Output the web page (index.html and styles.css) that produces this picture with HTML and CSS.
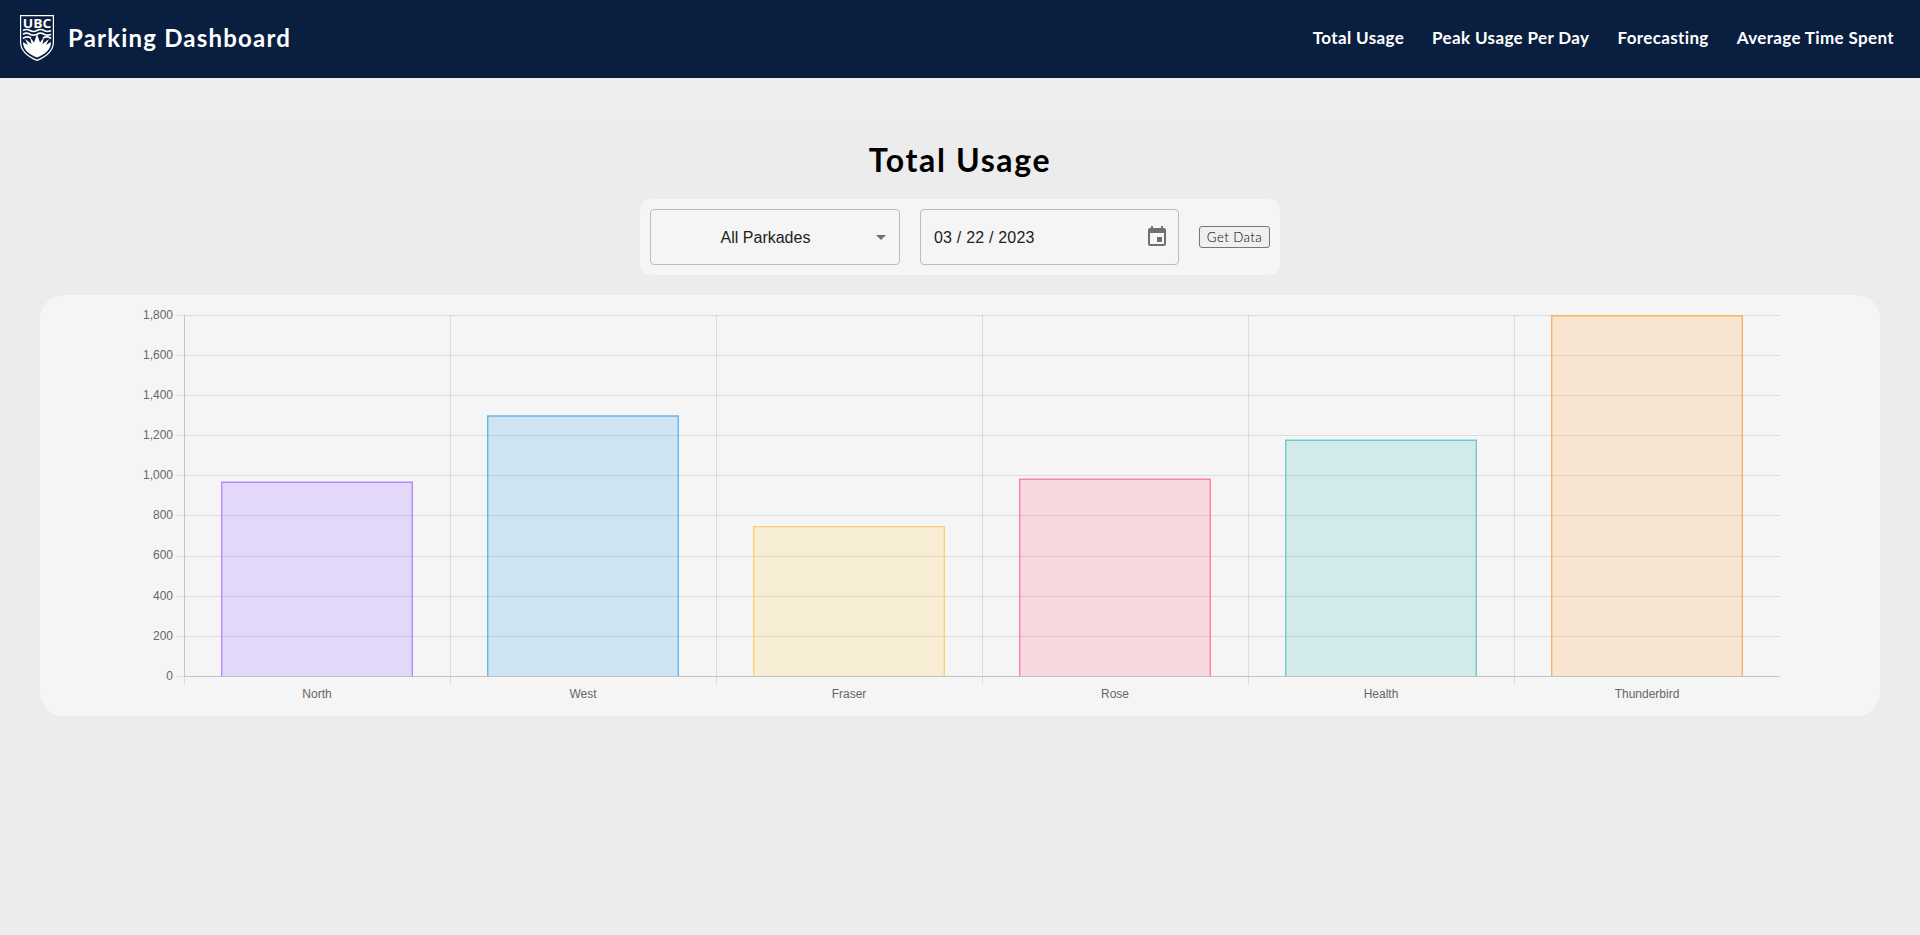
FILE: index.html
```html
<!DOCTYPE html>
<html lang="en">
<head>
<meta charset="utf-8">
<title>Parking Dashboard</title>
<link rel="stylesheet" href="styles.css">
</head>
<body>
<header class="navbar">
  <div class="brand">
    <svg class="crest" width="34" height="46" viewBox="0 0 34 46">
      <path d="M.6.6h32.8V27c0 9-7 14.500-16.400 18.400C7.600 41.500.6 36 .6 27z" fill="#0a1f40" stroke="#fff" stroke-width="1.200"/>
      <text x="17" y="12.600" class="crest-text" textLength="28.500" lengthAdjust="spacingAndGlyphs">UBC</text>
      <g fill="none" stroke="#fff" stroke-width="1.700">
        <path d="M3 15.500q3.500-2 7 0t7 0 7 0 7 0"/>
        <path d="M3 19.200q3.500-2 7 0t7 0 7 0 7 0"/>
        <path d="M3 23.500q3.500-3 8-.5M31 23.500q-3.500-3-8-.5"/>
      </g>
      <path d="M3 27l5 3-3-6 6.500 5-1.500-7 4 5.500L17 19l3 8.500 4-5.500-1.500 7 6.500-5-3 6 5-3c0 8-6 12-14 15.500C9 39 3 35 3 27z" fill="#fff"/>
    </svg>
    <span class="brand-name">Parking Dashboard</span>
  </div>
  <nav class="links">
    <a class="link">Total Usage</a>
    <a class="link">Peak Usage Per Day</a>
    <a class="link">Forecasting</a>
    <a class="link">Average Time Spent</a>
  </nav>
</header>
<main class="page">
  <h1 class="title">Total Usage</h1>
  <section class="filters">
    <div class="select"><span class="select-value">All Parkades</span>
      <svg class="arrow" width="24" height="24" viewBox="0 0 24 24"><path d="M7 10l5 5 5-5z" fill="#707070"/></svg>
    </div>
    <div class="date"><span class="date-value">03 / 22 / 2023</span>
      <svg width="24" height="24" viewBox="0 0 24 24"><path d="M17 12h-5v5h5v-5zM16 1v2H8V1H6v2H5c-1.110 0-1.990.9-1.990 2L3 19c0 1.100.89 2 2 2h14c1.100 0 2-.9 2-2V5c0-1.100-.9-2-2-2h-1V1h-2zm3 18H5V8h14v11z" fill="#707070"/></svg>
    </div>
    <button class="get">Get Data</button>
  </section>
  <section class="card">
    <svg class="chart" width="1640" height="381" viewBox="140 315 1640 381">
      <g class="grid">
        <path d="M176 315.500H1780M176 355.500H1780M176 395.500H1780M176 435.500H1780M176 475.500H1780M176 515.500H1780M176 556.500H1780M176 596.500H1780M176 636.500H1780M176 676.500H184"/>
        <path d="M184.500 677V684M450.500 315V684M716.500 315V684M982.500 315V684M1248.500 315V684M1514.500 315V684"/>
      </g>
      <g class="bars">
        <path class="north" d="M221.700 676V482.300H412.300V676"/>
        <path class="west" d="M487.700 676V416H678.300V676"/>
        <path class="fraser" d="M753.700 676V526.600H944.300V676"/>
        <path class="rose" d="M1019.700 676V479.300H1210.300V676"/>
        <path class="health" d="M1285.700 676V440.300H1476.300V676"/>
        <path class="thunder" d="M1551.700 676V315.700H1742.300V676"/>
      </g>
      <path class="axis" d="M184.500 315V677M184 676.500H1780"/>
      <g class="ylabels">
        <text x="173" y="319">1,800</text><text x="173" y="359">1,600</text><text x="173" y="399">1,400</text><text x="173" y="439">1,200</text><text x="173" y="479">1,000</text><text x="173" y="519">800</text><text x="173" y="559">600</text><text x="173" y="600">400</text><text x="173" y="640">200</text><text x="173" y="680">0</text>
      </g>
      <g class="xlabels">
        <text x="317" y="698">North</text><text x="583" y="698">West</text><text x="849" y="698">Fraser</text><text x="1115" y="698">Rose</text><text x="1381" y="698">Health</text><text x="1647" y="698">Thunderbird</text>
      </g>
    </svg>
  </section>
</main>
</body>
</html>
```
FILE: styles.css
```css
* { box-sizing: border-box; }
body { margin: 0; min-height: 935px; background: #ececec; font-family: Lato, sans-serif; }
.navbar { height: 78px; padding: 0 26px 0 20px; background: #0a1f40; color: #fff; display: flex; justify-content: space-between; align-items: center; }
.brand { display: flex; align-items: center; gap: 14px; }
.crest { display: block; margin-top: -3px; }
.crest-text { font: bold 13px "Open Sans", sans-serif; fill: #fff; text-anchor: middle; }
.brand-name { font-size: 24px; font-weight: 700; letter-spacing: 1.2px; white-space: nowrap; padding-bottom: 3px; }
.links { display: flex; gap: 28px; padding-bottom: 3px; }
.link { font-size: 17px; font-weight: 700; white-space: nowrap; letter-spacing: .36px; }
.page { border-top: 40px solid #eee; padding: 0 40px; display: flex; flex-direction: column; align-items: center; }
.title { margin: 22px 0 0; font-size: 32px; line-height: 40px; font-weight: 700; letter-spacing: 1.65px; color: #000; }
.filters { margin-top: 19px; width: 640px; height: 76px; padding: 10px; border-radius: 10px; background: #f5f5f5; display: flex; align-items: center; gap: 20px; font: 16px "Liberation Sans", Arial, sans-serif; color: #212121; }
.select, .date { height: 56px; border: 1px solid #bbb; border-radius: 4px; display: flex; align-items: center; }
.select { width: 250px; padding: 0 6px 0 13px; }
.select-value { flex: 1; text-align: center; padding: 1px 2px 0 0; }
.date { width: 259px; padding: 0 9px 0 13px; justify-content: space-between; }
.date-value { letter-spacing: .2px; padding-top: 1px; }
.get { width: 71px; height: 22px; padding: 0; border: 1px solid #767676; border-radius: 3px; background: #efefef; color: #000; font: 300 13.333px Lato, sans-serif; letter-spacing: .4px; }
.card { margin-top: 20px; width: 1840px; height: 421px; border-radius: 24px; background: #f5f5f5; padding: 20px 100px; }
.chart { display: block; overflow: visible; }
.grid { stroke: rgba(0,0,0,.1); fill: none; }
.axis { stroke: #c4c4c4; fill: none; }
.bars { stroke-width: 1.4; }
.north { fill: rgba(153,102,255,.2); stroke: #b28cff; }
.west { fill: rgba(54,162,235,.2); stroke: #66b5ea; }
.fraser { fill: rgba(255,205,86,.2); stroke: #fdd06a; }
.rose { fill: rgba(255,99,132,.2); stroke: #fc829d; }
.health { fill: rgba(75,192,192,.2); stroke: #70cbcb; }
.thunder { fill: rgba(255,159,64,.2); stroke: #fdb068; }
.ylabels, .xlabels { font: 12px "Liberation Sans", Arial, sans-serif; fill: #666; }
.ylabels { text-anchor: end; }
.xlabels { text-anchor: middle; }
```
